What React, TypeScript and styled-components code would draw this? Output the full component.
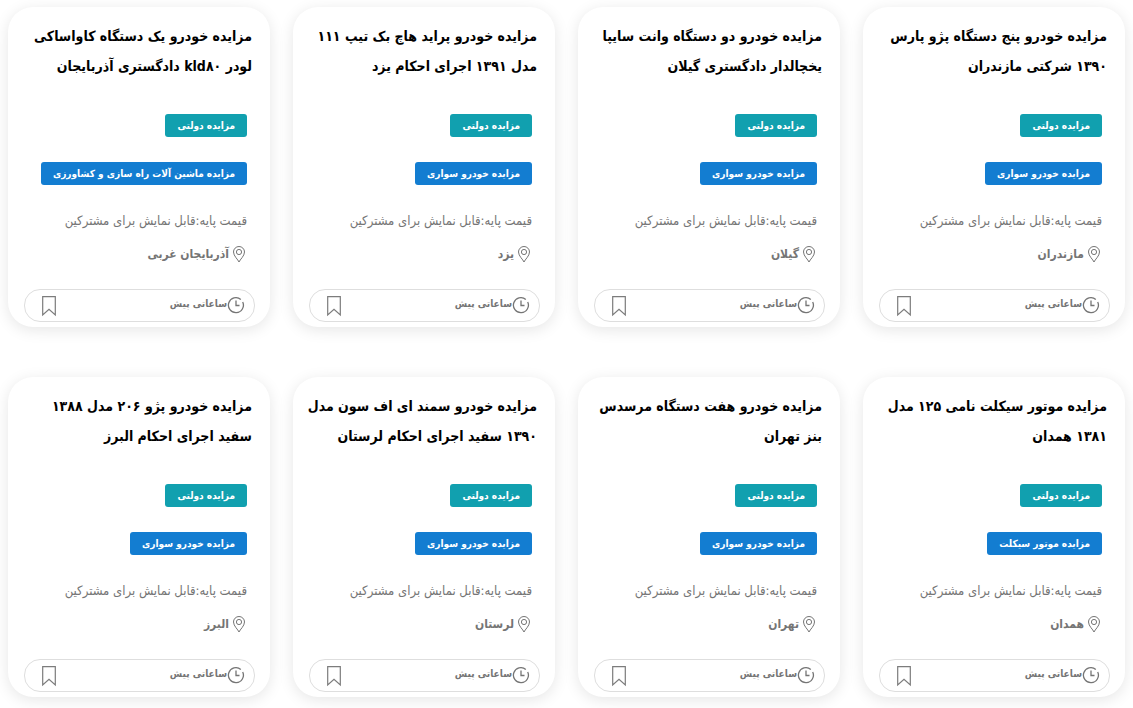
import React from "react";
import styled, { createGlobalStyle } from "styled-components";

const GlobalStyle = createGlobalStyle`
  * { box-sizing: border-box; }
  body {
    margin: 0;
    background: #fff;
    font-family: "DejaVu Sans Condensed", "DejaVu Sans", sans-serif;
    color: #757575;
  }
`;

const Grid = styled.main`
  display: grid;
  grid-template-columns: repeat(4, minmax(0, 1fr));
  gap: 50px 23px;
  padding: 7px 8px 11px;
`;

const Card = styled.article`
  display: flex;
  flex-direction: column;
  align-items: flex-start;
  padding: 14px 15px 5px 16px;
  border-radius: 25px;
  background: #fff;
  box-shadow: 0 3px 15px rgba(0, 0, 0, 0.1);
`;

const Title = styled.h2`
  margin: 0 3px 33px;
  font-size: 14px;
  font-weight: 700;
  line-height: 30px;
  color: #000;
  white-space: nowrap;
`;

const TitleLine = styled.span`
  display: block;
`;

const Badge = styled.a<{ $color: string }>`
  margin: 0 8px 25px;
  padding: 0 12px;
  border-radius: 3px;
  background: ${(p) => p.$color};
  color: #fff;
  font-size: 10px;
  font-weight: 700;
  line-height: 23px;
  white-space: nowrap;
  text-decoration: none;
`;

const Price = styled.p`
  margin: 0 8px;
  font-size: 13px;
  line-height: 22px;
  white-space: nowrap;
`;

const Place = styled.p`
  display: flex;
  align-items: center;
  gap: 3px;
  margin: 10px 9px 23px;
  font-size: 12px;
  font-weight: 700;
  line-height: 24px;
`;

const Footer = styled.footer`
  display: flex;
  align-items: center;
  justify-content: space-between;
  align-self: stretch;
  height: 33px;
  padding: 0 9px 0 16px;
  border: 1px solid #dedede;
  border-radius: 16px;
`;

const Time = styled.span`
  display: flex;
  align-items: center;
  font-size: 10px;
  font-weight: 700;
`;

const TimeText = styled.span`
  padding-bottom: 4px;
  line-height: 20px;
`;

const SaveButton = styled.button`
  display: flex;
  padding: 0;
  border: 0;
  background: none;
  color: inherit;
  cursor: pointer;
`;

const PinIcon = () => (
  <svg width="14" height="18" viewBox="0 0 14 18" fill="none" stroke="#757575" strokeWidth="1" aria-hidden="true">
    <path d="M7 17C6 14.500 1.500 11 1.500 7a5.500 5.500 0 0 1 11 0C12.500 11 8 14.500 7 17Z" />
    <circle cx="7" cy="7" r="2.600" />
  </svg>
);

const ClockIcon = () => (
  <svg width="18" height="18" viewBox="0 0 18 18" fill="none" stroke="#757575" strokeWidth="1.300" aria-hidden="true">
    <path d="M15.700 5A7.500 7.500 0 1 1 13.800 2.500" />
    <path d="M9 3.500V8.500H12.500" />
  </svg>
);

const BookmarkIcon = () => (
  <svg width="16" height="22" viewBox="0 0 16 22" fill="none" stroke="#7c7c7c" strokeWidth="1.200" aria-hidden="true">
    <path d="M1.700 1.700H14.300V20L8 14.200L1.700 20Z" />
  </svg>
);

type Item = { lines: [string, string]; category: string; place: string };

const car = "مزایده خودرو سواری";

const items: Item[] = [
  { lines: ["مزایده خودرو پنج دستگاه پژو پارس", "۱۳۹۰ شرکتی مازندران"], category: car, place: "مازندران" },
  { lines: ["مزایده خودرو دو دستگاه وانت سایپا", "یخچالدار دادگستری گیلان"], category: car, place: "گیلان" },
  { lines: ["مزایده خودرو پراید هاچ بک تیپ ۱۱۱", "مدل ۱۳۹۱ اجرای احکام یزد"], category: car, place: "یزد" },
  { lines: ["مزایده خودرو یک دستگاه کاواساکی", "لودر kld۸۰ دادگستری آذربایجان"], category: "مزایده ماشین آلات راه سازی و کشاورزی", place: "آذربایجان غربی" },
  { lines: ["مزایده موتور سیکلت نامی ۱۲۵ مدل", "۱۳۸۱ همدان"], category: "مزایده موتور سیکلت", place: "همدان" },
  { lines: ["مزایده خودرو هفت دستگاه مرسدس", "بنز تهران"], category: car, place: "تهران" },
  { lines: ["مزایده خودرو سمند ای اف سون مدل", "۱۳۹۰ سفید اجرای احکام لرستان"], category: car, place: "لرستان" },
  { lines: ["مزایده خودرو پژو ۲۰۶ مدل ۱۳۸۸", "سفید اجرای احکام البرز"], category: car, place: "البرز" },
];

export default function App() {
  return (
    <>
      <GlobalStyle />
      <Grid dir="rtl" lang="fa">
        {items.map((item, i) => (
          <Card key={i}>
            <Title>
              <TitleLine>{item.lines[0]}</TitleLine>
              <TitleLine>{item.lines[1]}</TitleLine>
            </Title>
            <Badge href="#" $color="#11a0af">مزایده دولتی</Badge>
            <Badge href="#" $color="#137dd1">{item.category}</Badge>
            <Price>قیمت پایه:قابل نمایش برای مشترکین</Price>
            <Place>
              <PinIcon />
              {item.place}
            </Place>
            <Footer>
              <Time>
                <ClockIcon />
                <TimeText>ساعاتی پیش</TimeText>
              </Time>
              <SaveButton type="button" aria-label="ذخیره">
                <BookmarkIcon />
              </SaveButton>
            </Footer>
          </Card>
        ))}
      </Grid>
    </>
  );
}
